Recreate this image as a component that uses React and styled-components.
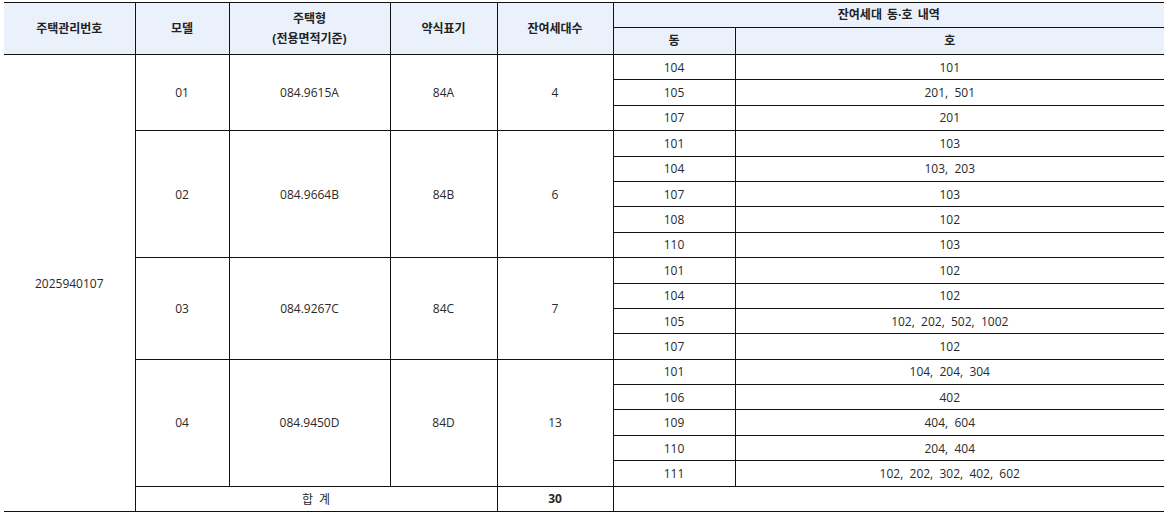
import React from 'react'
import styled, { createGlobalStyle } from 'styled-components'

const GlobalStyle = createGlobalStyle`
    body {
        margin: 0;
        background: #fff;
        font-family: "Open Sans", "Noto Sans CJK KR", sans-serif;
        color: #222;
    }
`

const Wrap = styled.div`
    padding: 2px 8px 0 4px;
`

const Table = styled.table`
    width: 1160px;
    border-collapse: collapse;
    table-layout: fixed;
    font-size: 12px;
    border-top: 1px solid #111;
    border-bottom: 1px solid #111;
`

const Th = styled.th`
    background: #ebf1fa;
    font-weight: 700;
    color: #222;
    text-align: center;
    vertical-align: middle;
    padding: 0;
    line-height: 20px;
    border: 1px solid #111;
    border-left: ${props => props.$first ? 'none' : '1px solid #111'};
    border-right: ${props => props.$last ? 'none' : '1px solid #111'};
    word-spacing: ${props => props.$spread ? '2px' : 'normal'};
`

const HeadRow = styled.tr`
    height: ${props => props.$h}px;
`

const Row = styled.tr`
    height: 25.4px;
`

const Td = styled.td`
    text-align: center;
    vertical-align: middle;
    padding: 0;
    color: #2a2a2a;
    font-weight: ${props => props.$bold ? 700 : 400};
    border: 1px solid #111;
    border-left: ${props => props.$first ? 'none' : '1px solid #111'};
    border-right: ${props => props.$last ? 'none' : '1px solid #111'};
    word-spacing: ${props => props.$spread ? '3px' : 'normal'};
`

const models = [
    { no: '01', type: '084.9615A', short: '84A', count: 4, units: [['104', '101'], ['105', '201,  501'], ['107', '201']] },
    { no: '02', type: '084.9664B', short: '84B', count: 6, units: [['101', '103'], ['104', '103,  203'], ['107', '103'], ['108', '102'], ['110', '103']] },
    { no: '03', type: '084.9267C', short: '84C', count: 7, units: [['101', '102'], ['104', '102'], ['105', '102,  202,  502,  1002'], ['107', '102']] },
    { no: '04', type: '084.9450D', short: '84D', count: 13, units: [['101', '104,  204,  304'], ['106', '402'], ['109', '404,  604'], ['110', '204,  404'], ['111', '102,  202,  302,  402,  602']] },
]

const totalRows = models.reduce((n, m) => n + m.units.length, 0)

const App = () => {
    const rows = []
    models.forEach((m, mi) => {
        m.units.forEach((u, ui) => {
            rows.push(
                <Row key={`${mi}-${ui}`}>
                    {mi === 0 && ui === 0 && (
                        <Td $first rowSpan={totalRows + 1}>2025940107</Td>
                    )}
                    {ui === 0 && (
                        <>
                            <Td rowSpan={m.units.length}>{m.no}</Td>
                            <Td rowSpan={m.units.length}>{m.type}</Td>
                            <Td rowSpan={m.units.length}>{m.short}</Td>
                            <Td rowSpan={m.units.length}>{m.count}</Td>
                        </>
                    )}
                    <Td>{u[0]}</Td>
                    <Td $last style={{ whiteSpace: 'pre' }}>{u[1]}</Td>
                </Row>
            )
        })
    })

    return (
        <Wrap>
            <GlobalStyle />
            <Table>
                <colgroup>
                    <col style={{ width: 131 }} />
                    <col style={{ width: 94 }} />
                    <col style={{ width: 161 }} />
                    <col style={{ width: 107 }} />
                    <col style={{ width: 116 }} />
                    <col style={{ width: 122 }} />
                    <col style={{ width: 429 }} />
                </colgroup>
                <thead>
                    <HeadRow $h={25}>
                        <Th $first rowSpan={2}>주택관리번호</Th>
                        <Th rowSpan={2}>모델</Th>
                        <Th rowSpan={2}>주택형<br />(전용면적기준)</Th>
                        <Th rowSpan={2}>약식표기</Th>
                        <Th rowSpan={2}>잔여세대수</Th>
                        <Th $last $spread colSpan={2}>잔여세대 동·호 내역</Th>
                    </HeadRow>
                    <HeadRow $h={27}>
                        <Th>동</Th>
                        <Th $last>호</Th>
                    </HeadRow>
                </thead>
                <tbody>
                    {rows}
                    <Row>
                        <Td colSpan={3} $spread>합 계</Td>
                        <Td $bold>30</Td>
                        <Td $last colSpan={2}></Td>
                    </Row>
                </tbody>
            </Table>
        </Wrap>
    )
}

export default App
